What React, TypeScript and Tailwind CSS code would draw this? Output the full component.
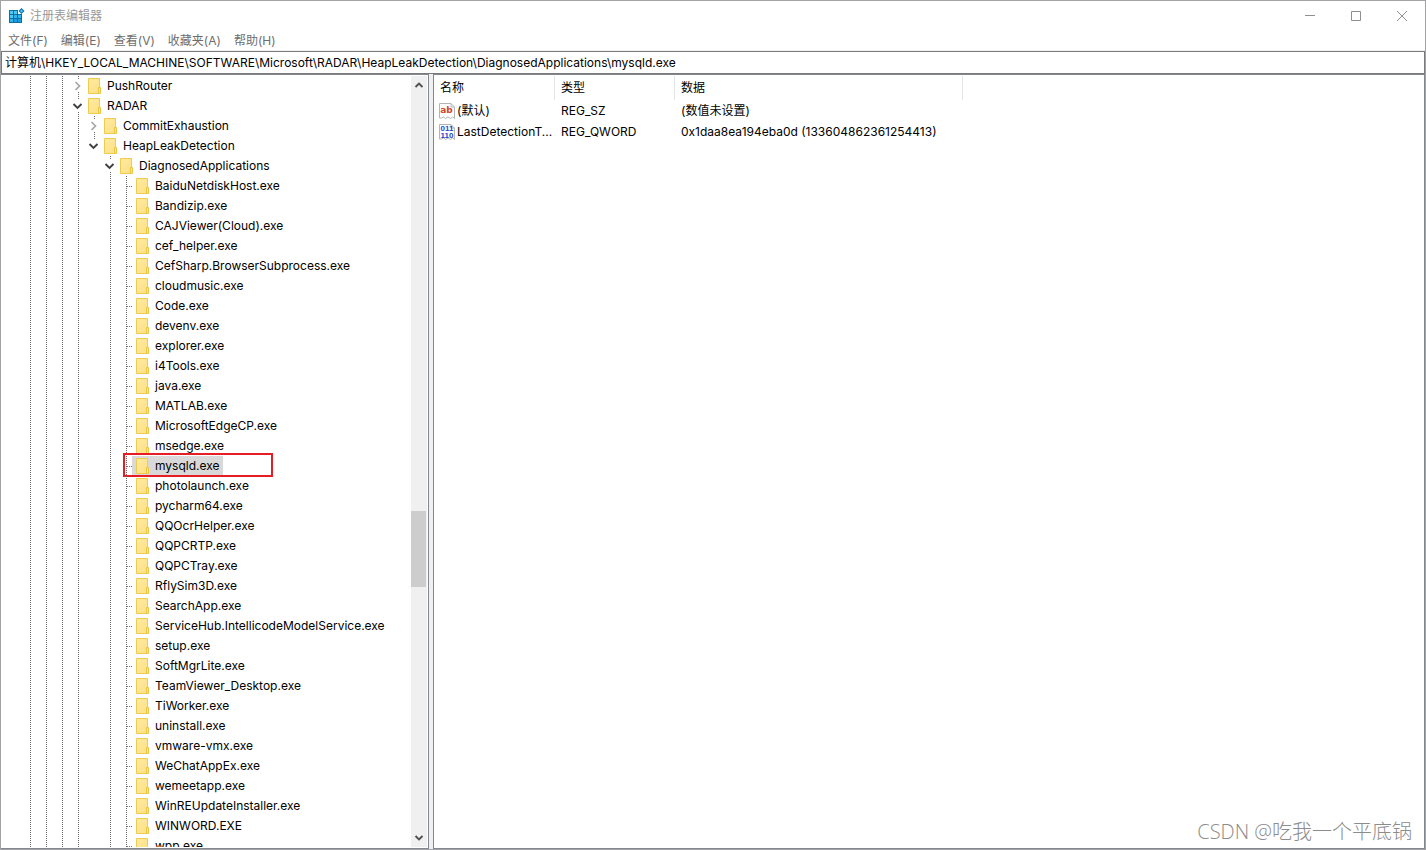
import { useState } from 'react';
import clsx from 'clsx';

type Guide = 'line' | 'blank';

interface TreeNode {
  name: string;
  guides: Guide[];
  state: 'open' | 'closed' | 'leaf';
  last?: boolean;
}

interface RegistryValue {
  name: string;
  type: string;
  data: string;
  kind: 'string' | 'binary';
}

const MENUS = ['文件(F)', '编辑(E)', '查看(V)', '收藏夹(A)', '帮助(H)'];

const KEY_PATH =
  '计算机\\HKEY_LOCAL_MACHINE\\SOFTWARE\\Microsoft\\RADAR\\HeapLeakDetection\\DiagnosedApplications\\mysqld.exe';

const APPLICATIONS = [
  'BaiduNetdiskHost.exe',
  'Bandizip.exe',
  'CAJViewer(Cloud).exe',
  'cef_helper.exe',
  'CefSharp.BrowserSubprocess.exe',
  'cloudmusic.exe',
  'Code.exe',
  'devenv.exe',
  'explorer.exe',
  'i4Tools.exe',
  'java.exe',
  'MATLAB.exe',
  'MicrosoftEdgeCP.exe',
  'msedge.exe',
  'mysqld.exe',
  'photolaunch.exe',
  'pycharm64.exe',
  'QQOcrHelper.exe',
  'QQPCRTP.exe',
  'QQPCTray.exe',
  'RflySim3D.exe',
  'SearchApp.exe',
  'ServiceHub.IntellicodeModelService.exe',
  'setup.exe',
  'SoftMgrLite.exe',
  'TeamViewer_Desktop.exe',
  'TiWorker.exe',
  'uninstall.exe',
  'vmware-vmx.exe',
  'WeChatAppEx.exe',
  'wemeetapp.exe',
  'WinREUpdateInstaller.exe',
  'WINWORD.EXE',
  'wpp.exe',
];

const NODES: TreeNode[] = [
  { name: 'PushRouter', guides: ['line', 'line', 'line'], state: 'closed' },
  { name: 'RADAR', guides: ['line', 'line', 'line'], state: 'open' },
  { name: 'CommitExhaustion', guides: ['line', 'line', 'line', 'line'], state: 'closed' },
  { name: 'HeapLeakDetection', guides: ['line', 'line', 'line', 'line'], state: 'open', last: true },
  { name: 'DiagnosedApplications', guides: ['line', 'line', 'line', 'line', 'blank'], state: 'open' },
  ...APPLICATIONS.map(
    (name): TreeNode => ({
      name,
      guides: ['line', 'line', 'line', 'line', 'blank', 'line'],
      state: 'leaf',
    })
  ),
];

const VALUES: RegistryValue[] = [
  { name: '(默认)', type: 'REG_SZ', data: '(数值未设置)', kind: 'string' },
  {
    name: 'LastDetectionT...',
    type: 'REG_QWORD',
    data: '0x1daa8ea194eba0d (133604862361254413)',
    kind: 'binary',
  },
];

// One dot every second pixel, so the line runs on from row to row
const DOTS = 'w-px bg-[linear-gradient(#6a6a6a_50%,transparent_50%)] bg-[length:1px_2px]';

function RegeditIcon() {
  return (
    <svg width="16" height="16" viewBox="0 0 16 16" aria-hidden="true">
      <path d="M0 2h9v4h4v9H0z" fill="#0a6fa8" />
      <path d="M1 3h3v3H1zM5 3h3v3H5zM1 7h3v3H1z" fill="#4cc9f5" />
      <path d="M5 7h3v3H5zM9 7h3v3H9zM1 11h3v3H1z" fill="#35b4ea" />
      <path d="M5 11h3v3H5zM9 11h3v3H9z" fill="#1d9ddb" />
      <path d="M12.5 0l3 3-3 3-3-3z" fill="#0a6fa8" />
      <path d="M12.5 1.500L14 3l-1.500 1.500L11 3z" fill="#4cc9f5" />
    </svg>
  );
}

function FolderIcon() {
  return (
    <svg width="13" height="16" viewBox="0 0 13 16" className="shrink-0" aria-hidden="true">
      <defs>
        <linearGradient id="folder" x1="0" y1="0" x2="1" y2="1">
          <stop offset="0" stopColor="#ffeba3" />
          <stop offset="1" stopColor="#fddf83" />
        </linearGradient>
      </defs>
      <path d="M.5.500h11v15H.5z" fill="url(#folder)" stroke="#efcb4e" />
      <path d="M10.500 9.500h2v6h-2z" fill="#ffe79a" stroke="#ebc443" />
    </svg>
  );
}

function Chevron({ open }: { open: boolean }) {
  return (
    <svg width="11" height="12" viewBox="0 0 11 12" fill="none" className="ml-[2px] shrink-0" aria-hidden="true">
      {open ? (
        <path d="M1.500 4l4 4 4-4" stroke="#404040" strokeWidth="1.900" />
      ) : (
        <path d="M3.500 2l4 4-4 4" stroke="#a6a6a6" strokeWidth="1.700" />
      )}
    </svg>
  );
}

function ScrollArrow({ up }: { up?: boolean }) {
  return (
    <svg width="10" height="8" viewBox="0 0 10 8" fill="none" aria-hidden="true">
      <path d={up ? 'M1.500 6L5 2.500 8.500 6' : 'M1.500 2L5 5.500 8.500 2'} stroke="#505050" strokeWidth="1.900" />
    </svg>
  );
}

function ValueIcon({ kind }: { kind: RegistryValue['kind'] }) {
  return (
    <svg width="16" height="16" viewBox="0 0 16 16" className="shrink-0" aria-hidden="true">
      <path
        d="M.5.500h11.500l3.500 3.500v11.500l-2-1.500-2 1.500-2.500-1.500-2.500 1.500-2-1.500-2 1h-2z"
        fill="#fff"
        stroke="#b4b4b4"
      />
      <path d="M12 .5v3.500h3.500" fill="none" stroke="#b4b4b4" />
      {kind === 'string' ? (
        <text x="7.500" y="10" textAnchor="middle" fontSize="9" fontWeight="700" fill="#d0452b" className="font-['DejaVu_Sans',sans-serif]">
          ab
        </text>
      ) : (
        <g textAnchor="middle" fontSize="8" fontWeight="700" fill="#2346cf" className="font-['Liberation_Sans',sans-serif]">
          <text x="8" y="7">011</text>
          <text x="8" y="14">110</text>
        </g>
      )}
    </svg>
  );
}

function TreeRow({ node, selected, onSelect }: { node: TreeNode; selected: boolean; onSelect: () => void }) {
  return (
    <li role="treeitem" aria-selected={selected} className="relative flex h-5">
      {node.guides.map((guide, i) => (
        <span key={i} className="flex w-4 shrink-0 pl-2">
          {guide === 'line' && <span className={DOTS} />}
        </span>
      ))}

      {node.state === 'leaf' ? (
        <span className="flex w-[14px] shrink-0 pl-2">
          <span className={DOTS} />
          <span className="flex-1 self-center border-t border-dotted border-[#7a7a7a]" />
        </span>
      ) : (
        <span className="flex w-[14px] shrink-0 flex-col">
          <span className={clsx('ml-2 flex-1', DOTS)} />
          <Chevron open={node.state === 'open'} />
          <span className={clsx('ml-2 flex-1', !node.last && DOTS)} />
        </span>
      )}

      <button
        type="button"
        onClick={onSelect}
        className={clsx('flex items-center gap-[6px] whitespace-nowrap px-1', selected && 'bg-[#d9d9d9]')}
      >
        <FolderIcon />
        {node.name}
      </button>

      {/* Highlight frame */}
      {node.name === 'mysqld.exe' && (
        <span className="pointer-events-none absolute -top-[3px] left-[101px] h-6 w-[150px] border-2 border-[#e81c24]" />
      )}
    </li>
  );
}

export default function App() {
  const [selected, setSelected] = useState('mysqld.exe');
  const [path, setPath] = useState(KEY_PATH);

  return (
    <div className="relative flex h-screen flex-col overflow-hidden border border-[#a3a3a5] bg-white font-['Inter','Noto_Sans_CJK_SC',sans-serif] text-xs text-black">
      {/* Title bar */}
      <header className="flex h-[30px] shrink-0 items-center justify-between pl-2 text-[#999999]">
        <div className="flex items-center gap-[5px]">
          <RegeditIcon />
          <h1>注册表编辑器</h1>
        </div>
        <div className="flex h-full">
          <button type="button" aria-label="最小化" className="grid w-[46px] place-items-center">
            <svg width="10" height="10" viewBox="0 0 10 10">
              <path d="M0 4.500h10" stroke="#8f8f8f" />
            </svg>
          </button>
          <button type="button" aria-label="最大化" className="grid w-[46px] place-items-center">
            <svg width="10" height="10" viewBox="0 0 10 10">
              <path d="M.5.500h9v9h-9z" fill="none" stroke="#8f8f8f" />
            </svg>
          </button>
          <button type="button" aria-label="关闭" className="grid w-[46px] place-items-center">
            <svg width="10" height="10" viewBox="0 0 10 10">
              <path d="M0 0l10 10M10 0L0 10" stroke="#8f8f8f" />
            </svg>
          </button>
        </div>
      </header>

      {/* Menu */}
      <nav className="flex h-5 shrink-0 items-center gap-[13px] border-b border-[#f0f0f0] px-[7px] text-[#6d6d6d]">
        {MENUS.map((menu) => (
          <button key={menu} type="button" className="whitespace-nowrap">
            {menu}
          </button>
        ))}
      </nav>

      {/* Address bar */}
      <input
        type="text"
        aria-label="地址"
        value={path}
        onChange={(e) => setPath(e.target.value)}
        className="h-[23px] w-full shrink-0 border border-[#7a7a7a] bg-white px-[3px] pb-[2px] outline-none"
      />

      <div className="flex min-h-0 flex-1 bg-[#f0f0f0]">
        {/* Key tree */}
        <section className="flex w-[428px] shrink-0 border border-l-0 border-[#828790] bg-white py-px">
          <ul role="tree" className="min-w-0 flex-1 overflow-hidden pl-[21px]">
            {NODES.map((node) => (
              <TreeRow
                key={node.name}
                node={node}
                selected={node.name === selected}
                onSelect={() => setSelected(node.name)}
              />
            ))}
          </ul>
          <div className="mr-px flex w-4 shrink-0 flex-col bg-[#f0f0f0]">
            <button type="button" aria-label="向上滚动" className="grid h-[18px] place-items-center">
              <ScrollArrow up />
            </button>
            <div className="grow-[417]" />
            <div className="mr-px h-[76px] bg-[#cdcdcd]" />
            <div className="grow-[242]" />
            <button type="button" aria-label="向下滚动" className="grid h-[18px] place-items-center">
              <ScrollArrow />
            </button>
          </div>
        </section>

        {/* Values */}
        <section className="ml-1 min-w-0 flex-1 overflow-hidden border border-[#828790] bg-white pt-px">
          <table className="w-[529px] table-fixed border-separate border-spacing-0 text-left">
            <colgroup>
              <col className="w-[121px]" />
              <col className="w-[120px]" />
              <col className="w-[288px]" />
            </colgroup>
            <thead>
              <tr className="h-6">
                {['名称', '类型', '数据'].map((title) => (
                  <th key={title} scope="col" className="border-r border-[#e5e5e5] px-[6px] font-normal">
                    {title}
                  </th>
                ))}
              </tr>
            </thead>
            <tbody>
              {VALUES.map((value) => (
                <tr key={value.name} className="h-[21px]">
                  <td className="pl-[5px]">
                    <div className="flex items-center gap-[2px] whitespace-nowrap">
                      <ValueIcon kind={value.kind} />
                      <span>{value.name}</span>
                    </div>
                  </td>
                  <td className="px-[6px]">{value.type}</td>
                  <td className="whitespace-nowrap px-[6px]">{value.data}</td>
                </tr>
              ))}
            </tbody>
          </table>
        </section>
      </div>

      {/* Watermark */}
      <p className="pointer-events-none absolute bottom-[3px] right-[13px] font-['Open_Sans','Noto_Sans_CJK_SC',sans-serif] text-xl leading-7 font-light text-[#8c8c8c]">
        CSDN @吃我一个平底锅
      </p>
    </div>
  );
}
